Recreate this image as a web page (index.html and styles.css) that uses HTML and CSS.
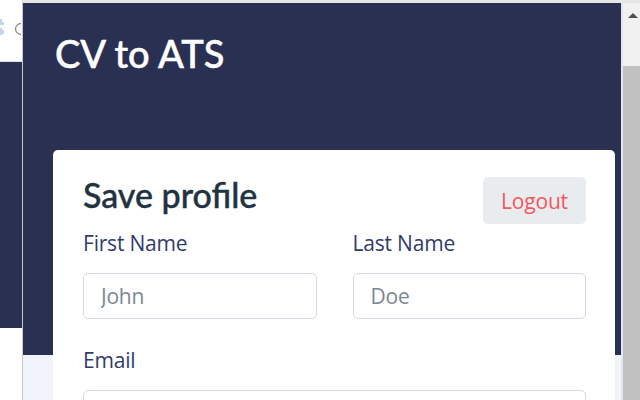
FILE: index.html
```html
<!DOCTYPE html>
<html lang="en">
  <head>
    <title>CV to ATS</title>
    <link rel="stylesheet" href="styles.css">
  </head>
  <body>
    <div class="screen">
      <div class="host-page">
        <div class="host-bar">
          <svg class="host-tab" width="5" height="18" viewBox="0 0 5 18">
            <path d="M1 1v6M3 4v3M1 10v7M3 12v4" stroke="#9fb6dc" stroke-width="1.2" fill="none"/>
          </svg>
          <svg class="host-reload" width="9" height="16" viewBox="0 0 9 16">
            <path d="M7 2.5A5.5 5.5 0 0 0 7 13.5" stroke="#8c8c8c" stroke-width="1.3" fill="none"/>
          </svg>
        </div>
        <div class="host-band"></div>
      </div>

      <div class="popup">
        <div class="popup-view">
          <div class="hero">
            <h1>CV to ATS</h1>
          </div>

          <div class="card">
            <div class="card-head">
              <h2>Save profile</h2>
              <button class="logout">Logout</button>
            </div>

            <div class="fields">
              <div class="field">
                <label for="first">First Name</label>
                <input id="first" type="text" placeholder="John">
              </div>
              <div class="field">
                <label for="last">Last Name</label>
                <input id="last" type="text" placeholder="Doe">
              </div>
              <div class="field wide">
                <label for="email">Email</label>
                <input id="email" type="email">
              </div>
            </div>
          </div>
        </div>

        <div class="scrollbar">
          <span class="scroll-arrow"></span>
          <div class="scroll-thumb"></div>
        </div>
      </div>
    </div>
  </body>
</html>
```

FILE: styles.css
```css
body {
  margin: 0;
  font-family: "Open Sans", "Noto Sans", sans-serif;
}

.screen {
  display: flex;
  height: 400px;
  overflow: hidden;
  background-color: #ffffff;
}

/* page behind the popup */
.host-page {
  width: 22px;
  flex-shrink: 0;
  overflow: hidden;
}

.host-bar {
  height: 61px;
  border-bottom: 1px solid #e2e2e2;
  position: relative;
}

.host-tab {
  position: absolute;
  left: 0;
  top: 18px;
}

.host-reload {
  position: absolute;
  left: 14px;
  top: 21px;
}

.host-band {
  height: 266px;
  background-color: #2a3052;
}

/* extension popup */
.popup {
  display: flex;
  flex: 1;
  border-top: 3px solid #e6e6e6;
  border-left: 1px solid #c9c9c9;
}

.popup-view {
  width: 598px;
  flex-shrink: 0;
  background: linear-gradient(#2a3052 352px, #f1f4fb 352px);
}

.hero {
  height: 147px;
  padding-left: 32px;
  box-sizing: border-box;
  padding-top: 27px;
}

h1 {
  margin: 0;
  font-family: "Lato", sans-serif;
  font-weight: 500;
  font-size: 38px;
  line-height: 46px;
  color: #ffffff;
  -webkit-text-stroke: 0.5px #ffffff;
}

.card {
  margin-left: 30px;
  width: 562px;
  height: 300px;
  background-color: #ffffff;
  border-radius: 5px;
  padding: 27px 29px 0 30px;
  box-sizing: border-box;
}

.card-head {
  display: flex;
  justify-content: space-between;
  align-items: flex-start;
}

h2 {
  margin: -5px 0 0 0;
  font-family: "Lato", sans-serif;
  font-weight: 500;
  font-size: 34px;
  line-height: 46px;
  color: #1f3341;
  -webkit-text-stroke: 0.4px #1f3341;
}

.logout {
  width: 103px;
  height: 47px;
  border: none;
  border-radius: 5px;
  background-color: #e9ecef;
  color: #f2575c;
  font-family: "Open Sans", sans-serif;
  font-size: 21px;
  letter-spacing: -0.2px;
}

.fields {
  display: grid;
  grid-template-columns: 1fr 1fr;
  column-gap: 36px;
  row-gap: 27px;
  margin-top: 5px;
}

.wide {
  grid-column: 1 / -1;
}

label {
  display: block;
  font-size: 21px;
  letter-spacing: -0.2px;
  line-height: 28px;
  color: #313b6c;
  margin-bottom: 16px;
}

input {
  display: block;
  width: 100%;
  height: 46px;
  box-sizing: border-box;
  border: 1px solid #d3dae3;
  border-radius: 5px;
  padding: 0 17px;
  font-family: "Open Sans", sans-serif;
  font-size: 21px;
  letter-spacing: -0.2px;
  color: #313b6c;
}

input::placeholder {
  color: #7d8793;
}

/* popup scrollbar */
.scrollbar {
  width: 17px;
  flex-shrink: 0;
  border-left: 2px solid #e3e6ee;
  background-color: #f1f1f1;
  position: relative;
}

.scroll-arrow {
  position: absolute;
  left: 5px;
  top: 10px;
  border-left: 5px solid transparent;
  border-right: 5px solid transparent;
  border-bottom: 5px solid #505050;
}

.scroll-thumb {
  margin-top: 63px;
  height: 400px;
  background-color: #c1c1c1;
}
```
